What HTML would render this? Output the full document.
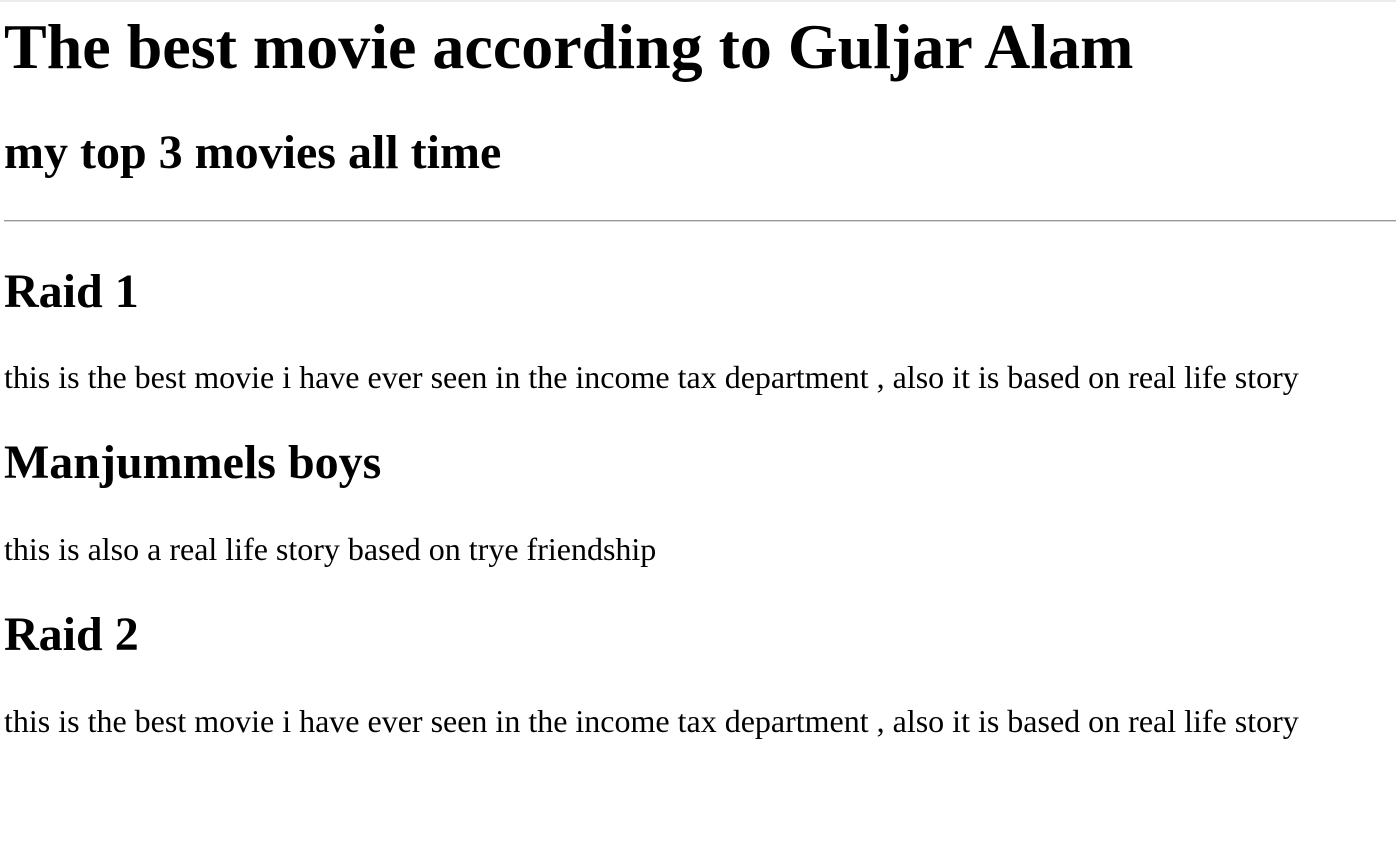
<!DOCTYPE html>
<html><head><meta charset="utf-8"><style>
html,body{margin:0;padding:0;background:#fff;width:1396px;height:854px;overflow:hidden;position:relative}
.t{position:absolute;left:4px;margin:0;white-space:nowrap;line-height:1;font-family:"Liberation Serif","Times New Roman",serif;color:#000}
.h1{font-size:64px;font-weight:bold}
.h2{font-size:48px;font-weight:bold}
.p{font-size:32px}
</style></head><body>
<div style="position:absolute;left:0;top:0;width:1396px;height:2px;background:#ececec"></div>
<div class="t h1" style="top:15px">The best movie according to Guljar Alam</div>
<div class="t h2" style="top:129px">my top 3 movies all time</div>
<div style="position:absolute;left:4px;top:220px;width:1392px;height:1px;background:#9a9a9a"></div>
<div style="position:absolute;left:4px;top:221px;width:1392px;height:1px;background:#d8d8d8"></div>
<div class="t h2" style="top:268px">Raid 1</div>
<div class="t p" style="top:361px">this is the best movie i have ever seen in the income tax department , also it is based on real life story</div>
<div class="t h2" style="top:439px">Manjummels boys</div>
<div class="t p" style="top:533px">this is also a real life story based on trye friendship</div>
<div class="t h2" style="top:611px">Raid 2</div>
<div class="t p" style="top:705px">this is the best movie i have ever seen in the income tax department , also it is based on real life story</div>
</body></html>
